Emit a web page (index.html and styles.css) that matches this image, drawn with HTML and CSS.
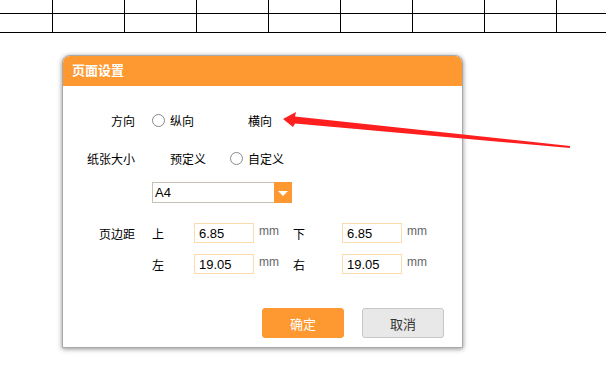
FILE: index.html
```html
<!DOCTYPE html>
<html lang="zh-CN">
<head>
    <meta charset="UTF-8">
    <meta name="viewport" content="width=device-width, initial-scale=1.0">
    <title>页面设置</title>
    <link rel="stylesheet" href="styles.css">
</head>
<body>
    <div class="sheet">
        <div class="sheet-row first">
            <div></div><div></div><div></div><div></div><div></div><div></div><div></div><div></div><div></div>
        </div>
        <div class="sheet-row second">
            <div></div><div></div><div></div><div></div><div></div><div></div><div></div><div></div><div></div>
        </div>
    </div>

    <div class="dialog">
        <div class="dialog-title">页面设置</div>
        <div class="dialog-body">
            <div class="row row-orient">
                <span class="label">方向</span>
                <span class="option"><span class="radio"></span>纵向</span>
                <span class="option"><span class="radio hidden"></span>横向</span>
            </div>
            <div class="row row-paper">
                <span class="label">纸张大小</span>
                <span class="option"><span class="radio hidden"></span>预定义</span>
                <span class="option"><span class="radio"></span>自定义</span>
            </div>
            <div class="row row-select">
                <span class="label"></span>
                <div class="select">
                    <span class="select-text">A4</span>
                    <span class="select-btn"><span class="caret"></span></span>
                </div>
            </div>
            <div class="row row-margin">
                <span class="label">页边距</span>
                <span class="side">上</span>
                <input class="num" type="text" value="6.85">
                <span class="unit">mm</span>
                <span class="side side-b">下</span>
                <input class="num" type="text" value="6.85">
                <span class="unit">mm</span>
            </div>
            <div class="row row-margin2">
                <span class="label"></span>
                <span class="side">左</span>
                <input class="num" type="text" value="19.05">
                <span class="unit">mm</span>
                <span class="side side-b">右</span>
                <input class="num" type="text" value="19.05">
                <span class="unit">mm</span>
            </div>
            <div class="actions">
                <button class="btn btn-ok">确定</button>
                <button class="btn btn-cancel">取消</button>
            </div>
        </div>
    </div>

    <svg class="arrow" width="606" height="368" viewBox="0 0 606 368">
        <polygon points="283,119 296,112 295,116.5 570,146 570,148 295,123.5 293,127" fill="#ff1f1f"/>
    </svg>
</body>
</html>
```

FILE: styles.css
```css
body {
    margin: 0;
    font-family: "Liberation Sans", "Noto Sans CJK SC", sans-serif;
    font-size: 12px;
    color: #000;
    background: #fff;
}
.sheet-row {
    display: grid;
    grid-template-columns: 53px repeat(7, 72px) 1fr;
    border-bottom: 1px solid #000;
    box-sizing: border-box;
}
.sheet-row div {
    border-right: 1px solid #000;
}
.sheet-row div:last-child {
    border-right: none;
}
.sheet-row.first {
    height: 14px;
}
.sheet-row.second {
    height: 19px;
}
.dialog {
    position: absolute;
    left: 62px;
    top: 55px;
    width: 401px;
    height: 293px;
    box-sizing: border-box;
    background: #fff;
    border: 1px solid #a8a8a8;
    border-radius: 8px 8px 0 0;
    box-shadow: 0 1px 5px rgba(0,0,0,0.45);
}
.dialog-title {
    height: 30px;
    line-height: 30px;
    padding-left: 9px;
    background: #fe9830;
    color: #fff;
    font-size: 13px;
    font-weight: bold;
    border-radius: 7px 7px 0 0;
}
.dialog-body {
    padding-top: 22px;
}
.row {
    display: flex;
    align-items: center;
}
.label {
    width: 72px;
    margin-right: 17px;
    text-align: right;
    flex-shrink: 0;
}
.option {
    display: flex;
    align-items: center;
    width: 78px;
}
.radio {
    width: 11px;
    height: 11px;
    border: 1px solid #8a8a8a;
    border-radius: 50%;
    margin-right: 5px;
    flex-shrink: 0;
}
.radio.hidden {
    visibility: hidden;
}
.row-orient {
    height: 24px;
}
.row-paper {
    height: 24px;
    margin-top: 14px;
}
.row-select {
    margin-top: 12px;
}
.select {
    display: flex;
    width: 140px;
    height: 21px;
    box-sizing: border-box;
    border: 1px solid #c9c1b6;
}
.select-text {
    flex: 1;
    padding-left: 2px;
    line-height: 19px;
    font-size: 13px;
}
.select-btn {
    width: 18px;
    margin: -1px -1px -1px 0;
    background: #fe9830;
    display: flex;
    align-items: center;
    justify-content: center;
}
.caret {
    width: 0;
    height: 0;
    border-left: 5px solid transparent;
    border-right: 5px solid transparent;
    border-top: 5px solid #fff;
    margin-top: 1px;
}
.row-margin {
    margin-top: 20px;
    height: 20px;
}
.row-margin2 {
    margin-top: 11px;
    height: 20px;
}
.side {
    width: 42px;
    flex-shrink: 0;
}
.side-b {
    width: 49px;
}
.num {
    width: 60px;
    height: 20px;
    box-sizing: border-box;
    border: 1px solid #fcdcae;
    padding: 0 0 0 4px;
    margin: 0;
    font-family: "Liberation Sans", sans-serif;
    font-size: 13px;
    color: #000;
    outline: none;
}
.unit {
    width: 34px;
    padding-left: 5px;
    color: #666;
    font-size: 12px;
    margin-top: -4px;
}
.actions {
    display: flex;
    justify-content: flex-end;
    gap: 18px;
    margin-top: 34px;
    padding-right: 18px;
}
.btn {
    width: 82px;
    height: 30px;
    border-radius: 3px;
    font-family: "Liberation Sans", "Noto Sans CJK SC", sans-serif;
    font-size: 13px;
    cursor: pointer;
}
.btn-ok {
    background: #fe9830;
    border: 1px solid #fe9830;
    color: #fff;
}
.btn-cancel {
    background: #e8e8e8;
    border: 1px solid #c6c6c6;
    color: #333;
}
.arrow {
    position: absolute;
    left: 0;
    top: 0;
    pointer-events: none;
}
```
